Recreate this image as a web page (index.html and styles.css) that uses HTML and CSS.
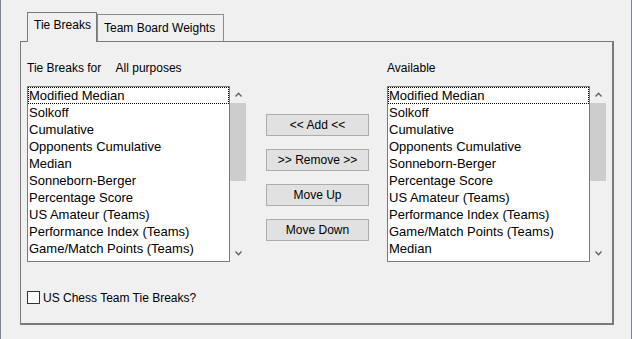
FILE: index.html
```html
<!DOCTYPE html>
<html lang="en">
<head>
  <meta charset="UTF-8" />
  <title>Tie Breaks</title>
  <link rel="stylesheet" href="styles.css">
</head>
<body>
  <div class="window">
    <!-- Tabs -->
    <div class="tabs">
      <div class="tab active">Tie Breaks</div>
      <div class="tab">Team Board Weights</div>
    </div>

    <div class="panel">
      <div class="columns">
        <!-- Selected tie breaks -->
        <div class="list-col">
          <div class="label">Tie Breaks for <span class="purpose">All purposes</span></div>
          <div class="list-wrap">
            <ul class="listbox">
              <li class="focused">Modified Median</li>
              <li>Solkoff</li>
              <li>Cumulative</li>
              <li>Opponents Cumulative</li>
              <li>Median</li>
              <li>Sonneborn-Berger</li>
              <li>Percentage Score</li>
              <li>US Amateur (Teams)</li>
              <li>Performance Index (Teams)</li>
              <li>Game/Match Points (Teams)</li>
            </ul>
            <div class="scrollbar">
              <div class="arrow"><svg width="7" height="5" viewBox="0 0 7 5"><polyline points="0.5,4.5 3.5,1.2 6.5,4.5" fill="none" stroke="#606060" stroke-width="1.3"/></svg></div>
              <div class="thumb"></div>
              <div class="track"></div>
              <div class="arrow"><svg width="7" height="5" viewBox="0 0 7 5"><polyline points="0.5,0.5 3.5,3.8 6.5,0.5" fill="none" stroke="#606060" stroke-width="1.3"/></svg></div>
            </div>
          </div>
        </div>

        <!-- Buttons -->
        <div class="buttons">
          <button class="btn">&lt;&lt; Add &lt;&lt;</button>
          <button class="btn">&gt;&gt; Remove &gt;&gt;</button>
          <button class="btn">Move Up</button>
          <button class="btn">Move Down</button>
        </div>

        <!-- Available tie breaks -->
        <div class="list-col">
          <div class="label">Available</div>
          <div class="list-wrap">
            <ul class="listbox">
              <li class="focused">Modified Median</li>
              <li>Solkoff</li>
              <li>Cumulative</li>
              <li>Opponents Cumulative</li>
              <li>Sonneborn-Berger</li>
              <li>Percentage Score</li>
              <li>US Amateur (Teams)</li>
              <li>Performance Index (Teams)</li>
              <li>Game/Match Points (Teams)</li>
              <li>Median</li>
            </ul>
            <div class="scrollbar">
              <div class="arrow"><svg width="7" height="5" viewBox="0 0 7 5"><polyline points="0.5,4.5 3.5,1.2 6.5,4.5" fill="none" stroke="#606060" stroke-width="1.3"/></svg></div>
              <div class="thumb"></div>
              <div class="track"></div>
              <div class="arrow"><svg width="7" height="5" viewBox="0 0 7 5"><polyline points="0.5,0.5 3.5,3.8 6.5,0.5" fill="none" stroke="#606060" stroke-width="1.3"/></svg></div>
            </div>
          </div>
        </div>
      </div>

      <label class="check">
        <span class="box"></span>
        US Chess Team Tie Breaks?
      </label>
    </div>
  </div>
</body>
</html>
```

FILE: styles.css
```css
/* Base */
* {
  box-sizing: border-box;
  margin: 0;
  padding: 0;
}

html, body {
  width: 632px;
  height: 339px;
  overflow: hidden;
  background-color: #f0f0f0;
  font-family: 'Liberation Sans', Arial, sans-serif;
  font-size: 12px;
  color: #000;
}

.window {
  height: 339px;
  padding: 12px 0 0 19px;
  border-left: 1px solid #7d8593;
  border-right: 1px solid #7d8593;
}

/* Tabs */
.tabs {
  display: flex;
  align-items: flex-end;
  padding-left: 7px;
  height: 29px;
}

.tab {
  height: 27px;
  padding: 6px 0 0 6px;
  border: 1px solid #8c8c8c;
  border-bottom: none;
  background-color: #f0f0f0;
  width: 127px;
}

.tab.active {
  width: 70px;
  height: 30px;
  margin-bottom: -1px;
  padding: 5px 0 0 6px;
  position: relative;
  z-index: 2;
  border-color: #7a7a7a;
}

/* Panel */
.panel {
  width: 594px;
  height: 284px;
  border: 1px solid #7a7a7a;
  border-right-width: 2px;
  border-bottom-width: 2px;
  padding: 19px 0 0 6px;
}

.columns {
  display: flex;
}

.label {
  height: 15px;
  line-height: 15px;
  margin-bottom: 10px;
}

.purpose {
  margin-left: 11px;
}

.list-wrap {
  display: flex;
  height: 176px;
}

/* Listbox */
.listbox {
  list-style: none;
  width: 203px;
  height: 176px;
  border: 1px solid #7a7a7a;
  background-color: #fff;
  font-size: 13px;
  overflow: hidden;
}

.listbox li {
  height: 17px;
  line-height: 15px;
  white-space: nowrap;
  border: 1px solid transparent;
}

.listbox li.focused {
  border: 1px dotted #000;
}

/* Scrollbar */
.scrollbar {
  width: 17px;
  display: flex;
  flex-direction: column;
}

.arrow {
  height: 17px;
  display: flex;
  align-items: center;
  justify-content: center;
}

.thumb {
  height: 78px;
  margin: 0 1px 0 0;
  background-color: #cdcdcd;
}

.track {
  flex: 1;
}

/* Buttons */
.buttons {
  display: flex;
  flex-direction: column;
  gap: 13px;
  margin: 53px 18px 0 19px;
}

.btn {
  width: 103px;
  height: 22px;
  background-color: #e1e1e1;
  border: 1px solid #adadad;
  font-family: 'Liberation Sans', Arial, sans-serif;
  font-size: 12px;
  color: #000;
}

/* Checkbox */
.check {
  display: flex;
  align-items: center;
  gap: 3px;
  margin-top: 29px;
  height: 13px;
}

.box {
  width: 13px;
  height: 13px;
  border: 1px solid #333;
  background-color: #fff;
}
```
